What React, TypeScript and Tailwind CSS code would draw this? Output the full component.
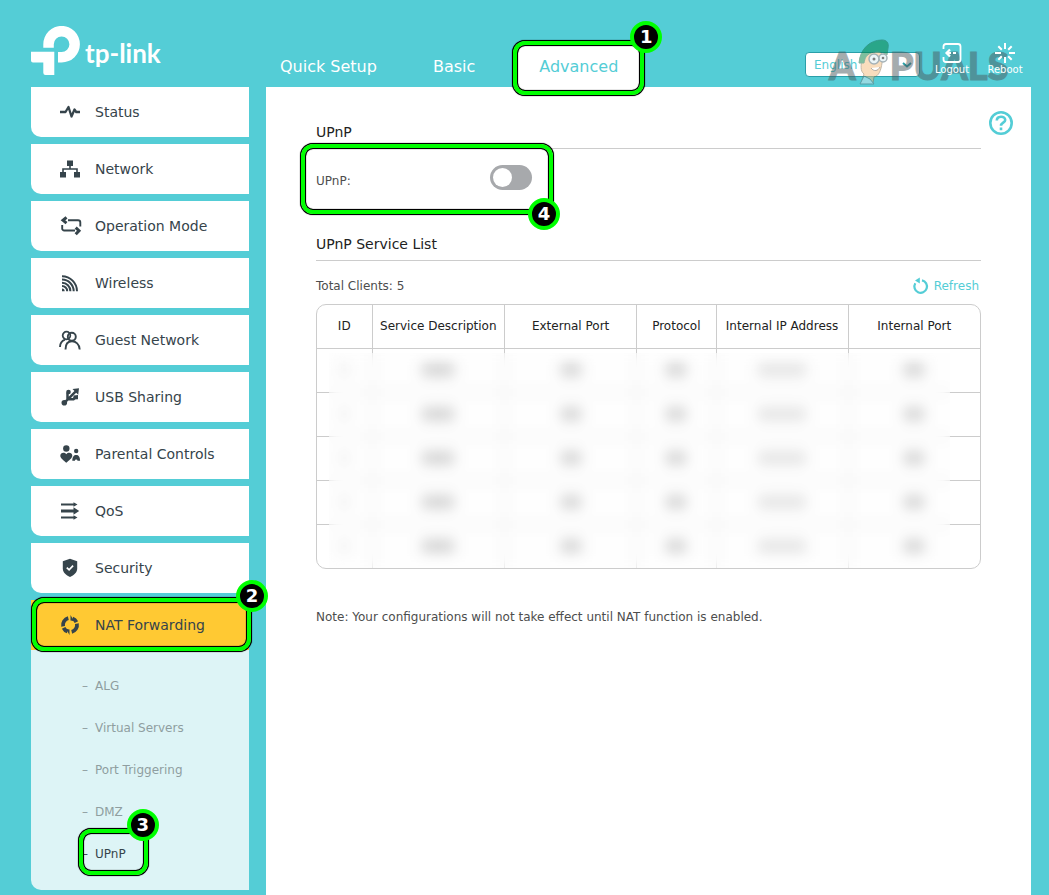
import type { ReactNode } from "react";

const font = "font-['DejaVu_Sans','Verdana',sans-serif]";

function Ring({ className }: { className: string }) {
  return (
    <span
      aria-hidden="true"
      className={`pointer-events-none absolute z-10 rounded-xl border-4 border-[#00ff00] shadow-[0_0_0_1px_#000,0_0_1px_1px_#000,inset_0_0_0_1px_#000,inset_0_0_1px_1px_#000] ${className}`}
    />
  );
}

function Badge({ n, className }: { n: number; className: string }) {
  return (
    <span
      className={`pointer-events-none absolute z-20 flex size-8 items-center justify-center rounded-full border-4 border-[#00ff00] bg-black text-lg leading-none font-bold text-white ${className}`}
    >
      {n}
    </span>
  );
}

function Icon({ children }: { children: ReactNode }) {
  return (
    <svg viewBox="0 0 20 20" className="size-5 shrink-0 overflow-visible" fill="currentColor" aria-hidden="true">
      {children}
    </svg>
  );
}

const line = { fill: "none", stroke: "currentColor", strokeWidth: 2 };

const items: { label: string; icon: ReactNode }[] = [
  {
    label: "Status",
    icon: <path {...line} strokeWidth={2.3} strokeLinejoin="round" d="M0 10h5.500L8.500 5l3 9.500 3-7 1.700 2.500H20" />,
  },
  {
    label: "Network",
    icon: (
      <>
        <path d="M7 1.500h6v5.500H7zM0 13h6v5.500H0zM14 13h6v5.500h-6z" />
        <path {...line} strokeWidth={1.600} d="M10 7v3M3 13v-3h14v3" />
      </>
    ),
  },
  {
    label: "Operation Mode",
    icon: (
      <>
        <path {...line} strokeWidth={1.900} d="M8 4.300h10a2.300 2.300 0 0 1 2.300 2.300V10.500M2.200 9v3.500a2 2 0 0 0 2 2H15" />
        <path {...line} strokeWidth={3} d="M6.500 1.300 3 4.300l3.500 2.900M15.700 11.600 19 14.700l-3.300 3.500" />
      </>
    ),
  },
  {
    label: "Wireless",
    icon: (
      <>
        <path d="M2 15.500a2.700 2.700 0 0 1 2.700 2.700H2z" />
        <path
          {...line}
          strokeWidth={2}
          d="M2 13a5.200 5.200 0 0 1 5.200 5.200M2 9.800a8.400 8.400 0 0 1 8.400 8.400M2 6.500a11.700 11.700 0 0 1 11.700 11.700M2 3.200a15 15 0 0 1 15 15"
        />
      </>
    ),
  },
  {
    label: "Guest Network",
    icon: (
      <>
        <circle {...line} strokeWidth={1.800} cx="6.500" cy="5.500" r="3.800" />
        <path {...line} strokeWidth={1.900} d="M0 17c0-4 1.800-6 5-7.300" />
        <circle {...line} strokeWidth={1.900} cx="11.800" cy="6.800" r="4" />
        <path {...line} strokeWidth={1.900} d="M5.500 19.500c0-5.500 2.800-8.200 6.500-8.200s7.500 2.700 7.700 8.200" />
      </>
    ),
  },
  {
    label: "USB Sharing",
    icon: (
      <>
        <circle cx="4.300" cy="15.800" r="2.800" />
        <circle cx="8.500" cy="5" r="2.300" />
        <path d="m12.500 2 6.500-.800-.800 6.500zM13.500 8.500l4.500-.5v4.200l-4.500.300z" />
        <path {...line} strokeWidth={2.500} d="m4.300 15.800 12-12M7.500 12V5.500M8.500 12.200h5l2-2.200" />
      </>
    ),
  },
  {
    label: "Parental Controls",
    icon: (
      <>
        <circle cx="6.300" cy="4.500" r="3.200" />
        <path d="M6.300 10.200C4.500 7.800.300 8.300.300 11.800c0 2.500 3.500 4.700 6 7 2.500-2.300 6-4.500 6-7 0-3.500-4.200-4-6-1.600z" />
        <circle cx="16.200" cy="7" r="2.200" />
        <path d="M12.300 16.800c0-4 1.500-5.800 3.900-5.800s3.900 1.800 3.900 5.800h-2.600a1.300 1.300 0 0 0-2.600 0z" />
      </>
    ),
  },
  {
    label: "QoS",
    icon: (
      <path d="M1 2.500h12.500V1.200l4 2.300-4 2.300V4.500H1zM1 8.500h12.500V6.200l5.700 3.800-5.700 3.800v-2.300H1zM1 15.500h12.500v-1.300l4 2.300-4 2.300v-1.300H1z" />
    ),
  },
  {
    label: "Security",
    icon: (
      <>
        <path d="M10 .800 17.200 3.300v7.200c0 4-3.200 6.700-7.200 8.500-4-1.800-7.200-4.500-7.200-8.500V3.300z" />
        <path d="m6.800 9.600 2.300 2.300 4-4.200" fill="none" stroke="white" strokeWidth={1.700} />
      </>
    ),
  },
];

const subItems = ["ALG", "Virtual Servers", "Port Triggering", "DMZ", "UPnP"];

const columns = [
  { label: "ID", width: "w-[8.3%]", blob: "w-1.5 opacity-50" },
  { label: "Service Description", width: "w-[20%]", blob: "w-8" },
  { label: "External Port", width: "w-[19.900%]", blob: "w-5" },
  { label: "Protocol", width: "w-[12%]", blob: "w-5" },
  { label: "Internal IP Address", width: "w-[19.900%]", blob: "w-12 opacity-60" },
  { label: "Internal Port", width: "w-[19.900%]", blob: "w-5" },
];

function Watermark() {
  return (
    <div
      aria-hidden="true"
      className="pointer-events-none absolute -top-1 left-6 z-10 flex items-end font-['Lato',sans-serif] text-[38px] leading-[48px] font-black text-[#4b5b5f] opacity-50 [-webkit-text-stroke:1px_#4b5b5f]"
    >
      <span>A</span>
      <svg viewBox="0 0 34 46" className="mb-1 h-[46px] w-[34px]">
        <path d="M6 20c0-5 6-9 13-9s8 6 7 13-3 13-8 14l-1 6H5l3-9C4 32 5 26 6 20z" fill="#f5bd7d" stroke="#8a7250" />
        <path d="M3 24C4 10 14 1 26 1c5 0 7 3 6 8l-1 7c-5-4-13-4-18-1-3 2-4 4-5 9z" fill="#00803f" stroke="#0f6c45" />
        <circle cx="18" cy="20" r="5" fill="#d9edf2" stroke="#4d6670" strokeWidth="1.500" />
        <circle cx="27" cy="19" r="4" fill="#d9edf2" stroke="#4d6670" strokeWidth="1.500" />
        <circle cx="18" cy="20" r="1.500" />
        <circle cx="27" cy="19" r="1.300" />
        <path d="M15 29c3 4 7 3 9-1" fill="white" stroke="#6a5844" />
        <path d="m8 37-4 8h14l-4-5z" fill="#d8e8ee" stroke="#58707a" />
      </svg>
      <span>PUALS</span>
    </div>
  );
}

export default function App() {
  return (
    <div className={`flex min-h-screen flex-col bg-[#54cdd6] pr-[18px] pl-[31px] text-[#36444b] ${font}`}>
      <header className="flex h-[87px] shrink-0 items-end">
        <a href="#home" aria-label="tp-link" className="mb-3 flex w-[225px] shrink-0 items-start text-white">
          <svg viewBox="0 0 49 49" className="size-[49px]" fill="currentColor" aria-hidden="true">
            <path d="M12.300 21.800V18.200A18.300 18.300 0 1 1 30.600 36.500H27V26h3.600A7.800 7.800 0 1 0 22.800 18.200v3.600z" />
            <path d="M0 25.700h23.300V49h-8.800q-2.200 0-2.200-2.200V36.500H2q-2 0-2-2z" />
          </svg>
          <span className="ml-[5px] pt-[11px] font-['Lato',sans-serif] text-[26px] leading-8 font-bold">tp-link</span>
        </a>
        <nav className="flex flex-1 items-stretch text-base text-white">
          <a href="#quick" className="flex h-[43px] items-center px-6 pt-0.5">Quick Setup</a>
          <a href="#basic" className="ml-2 flex h-[43px] items-center px-6 pt-0.5">Basic</a>
          <a href="#advanced" className="relative ml-4 flex h-[43px] items-center bg-white px-6 pt-0.5 text-[#54cdd6]">
            Advanced
            <Ring className="-inset-x-0.5 -top-[3px] -bottom-2" />
            <Badge n={1} className="-top-[23px] -right-5" />
          </a>
        </nav>
        <div className="relative flex items-end">
          <label className="relative mb-2.5">
            <span className="sr-only">Language</span>
            <select className="block h-[25px] w-[115px] appearance-none rounded border border-[#2a9fa9] bg-white px-2 text-xs text-[#54cdd6]">
              <option>English</option>
            </select>
            <svg viewBox="0 0 10 6" className="absolute top-2.5 right-2 h-1.5 w-2.5" aria-hidden="true">
              <path d="m1 1 4 3.500L9 1" fill="none" stroke="#2a9fa9" strokeWidth="2" />
            </svg>
          </label>
          <button className="relative z-20 mb-2.5 ml-3 flex w-10 flex-col items-center text-[10px] leading-[14px] text-white">
            <svg viewBox="0 0 20 20" className="size-5" fill="none" stroke="currentColor" strokeWidth="1.800" aria-hidden="true">
              <path d="M1.500 6V3.500q0-2.500 2.500-2.500h12q2.500 0 2.500 2.500v13q0 2.500-2.500 2.500H4q-2.500 0-2.500-2.500V14" />
              <path d="M5 10h4M11 10h3M8 6.500 4.500 10 8 13.500" strokeWidth="2.200" />
            </svg>
            Logout
          </button>
          <button className="relative z-20 mr-1.5 mb-2.5 ml-[13px] flex w-10 flex-col items-center text-[10px] leading-[14px] text-white">
            <svg viewBox="0 0 20 20" className="size-5" fill="none" stroke="currentColor" strokeWidth="2" aria-hidden="true">
              <path d="M10 0v6M10 14v6M0 10h6M14 10h6M3.300 3.300l3.500 3.500M13.200 13.200l3.500 3.500M3.300 16.700l3.500-3.500M13.200 6.800l3.500-3.500" />
            </svg>
            Reboot
          </button>
          <Watermark />
        </div>
      </header>

      <div className="flex flex-1 gap-[17px]">
        <aside className="w-[218px] shrink-0 pb-[5px] text-sm">
          <ul className="flex flex-col gap-[7px]">
            {items.map((item) => (
              <li key={item.label}>
                <a href="#menu" className="flex h-[50px] items-center gap-[15px] rounded-bl-[10px] bg-white pl-[29px]">
                  <Icon>{item.icon}</Icon>
                  {item.label}
                </a>
              </li>
            ))}
            <li>
              <a href="#nat" className="relative flex h-[50px] items-center gap-[15px] bg-[#ffc933] pl-[29px]">
                <Icon>
                  <g fill="none" stroke="currentColor" strokeWidth="3.800">
                    <path d="M8.300 3.200A7 7 0 0 0 3.100 11.300" />
                    <path d="M3.600 12.900A7 7 0 0 0 7.500 16.500" />
                    <path d="M11.700 16.800A7 7 0 0 0 16.900 8.700" />
                    <path d="M16.400 7.100A7 7 0 0 0 12.500 3.500" />
                  </g>
                  <path d="M10.500 0v5.500L14 6zM9.500 20v-5.500L6 14z" />
                </Icon>
                NAT Forwarding
                <Ring className="-top-0.5 -right-0.5 -bottom-px left-px" />
                <Badge n={2} className="-top-5 -right-[19px]" />
              </a>
              <ul className="rounded-bl-[10px] bg-[#ddf4f6] pt-[15px] pb-[15px] pl-[51px] text-xs text-[#8f9ea0]">
                {subItems.map((label) => (
                  <li key={label} className="flex">
                    <a
                      href="#sub"
                      className={`relative flex h-[42px] items-center gap-[7px] ${label === "UPnP" ? "text-[#36444b]" : ""}`}
                    >
                      <span>–</span>
                      {label}
                      {label === "UPnP" && (
                        <>
                          <Ring className="-top-1 -right-[22px] bottom-0 -left-[3px]" />
                          <Badge n={3} className="-top-6 -right-[33px]" />
                        </>
                      )}
                    </a>
                  </li>
                ))}
              </ul>
            </li>
          </ul>
        </aside>

        <main className="flex min-w-0 flex-1 items-start bg-white pr-[18px] pl-[50px] text-xs text-[#4d4d4d]">
          <div className="min-w-0 flex-1">
            <h2 className="border-b border-[#ccc] pt-[35px] pb-1.5 text-sm leading-5 text-[#222]">UPnP</h2>
            <div className="relative flex h-[63px] w-[216px] items-center justify-between">
              <label htmlFor="upnp">UPnP:</label>
              <input
                id="upnp"
                type="checkbox"
                role="switch"
                className="mb-1.5 h-[25px] w-[42px] appearance-none rounded-full bg-[#a7a9ac] p-[3px] before:block before:size-[19px] before:rounded-full before:bg-white"
              />
              <Ring className="-top-[5px] -right-[21px] -bottom-0.5 -left-[15px]" />
              <Badge n={4} className="-right-7 -bottom-[18px]" />
            </div>
            <h2 className="border-b border-[#ccc] pt-[22px] pb-1.5 text-sm leading-5 text-[#222]">UPnP Service List</h2>
            <div className="flex h-[43px] items-center justify-between pt-1.5">
              <p>Total Clients: 5</p>
              <button className="mr-0.5 flex items-center gap-1 text-[#54cdd6]">
                <svg viewBox="0 0 18 18" className="size-[18px]" aria-hidden="true">
                  <path d="M10 3.300a6.300 6.300 0 1 1-6.700 2.900" fill="none" stroke="currentColor" strokeWidth="2.200" />
                  <path d="M7.800.500v6L3 3.500z" fill="currentColor" />
                </svg>
                Refresh
              </button>
            </div>
            <div className="relative overflow-hidden rounded-[10px] border border-[#ccc]">
              <table className="w-full table-fixed border-collapse">
                <thead>
                  <tr className="h-[43px] text-[#222]">
                    {columns.map((c) => (
                      <th
                        key={c.label}
                        className={`border-r border-b border-[#ccc] p-0 font-normal whitespace-nowrap last:border-r-0 ${c.width}`}
                      >
                        {c.label}
                      </th>
                    ))}
                  </tr>
                </thead>
                <tbody>
                  {[1, 2, 3, 4, 5].map((row) => (
                    <tr key={row} className="h-11 border-b border-[#ccc] last:border-b-0">
                      {columns.map((c) => (
                        <td key={c.label} className="border-r border-[#ccc] p-0 last:border-r-0">
                          <span className={`mx-auto block h-3 bg-[#bbb] ${c.blob}`} />
                        </td>
                      ))}
                    </tr>
                  ))}
                </tbody>
              </table>
              <div className="absolute top-12 right-[30px] bottom-0 left-3 bg-[#fdfdfd]/30 backdrop-blur-[7px]" />
            </div>
            <p className="mt-10 pb-6 leading-4">
              Note: Your configurations will not take effect until NAT function is enabled.
            </p>
          </div>
          <button aria-label="Help" className="mt-6 ml-2 text-[#54cdd6]">
            <svg viewBox="0 0 24 24" className="size-6" fill="none" stroke="currentColor" strokeWidth="2.600" aria-hidden="true">
              <circle cx="12" cy="12" r="10.700" />
              <path d="M7.800 9.500C7.800 4.600 16.200 4.600 16.200 9c0 2.700-4.200 2.700-4.200 5.800M12 16.500v2.800" />
            </svg>
          </button>
        </main>
      </div>
    </div>
  );
}
